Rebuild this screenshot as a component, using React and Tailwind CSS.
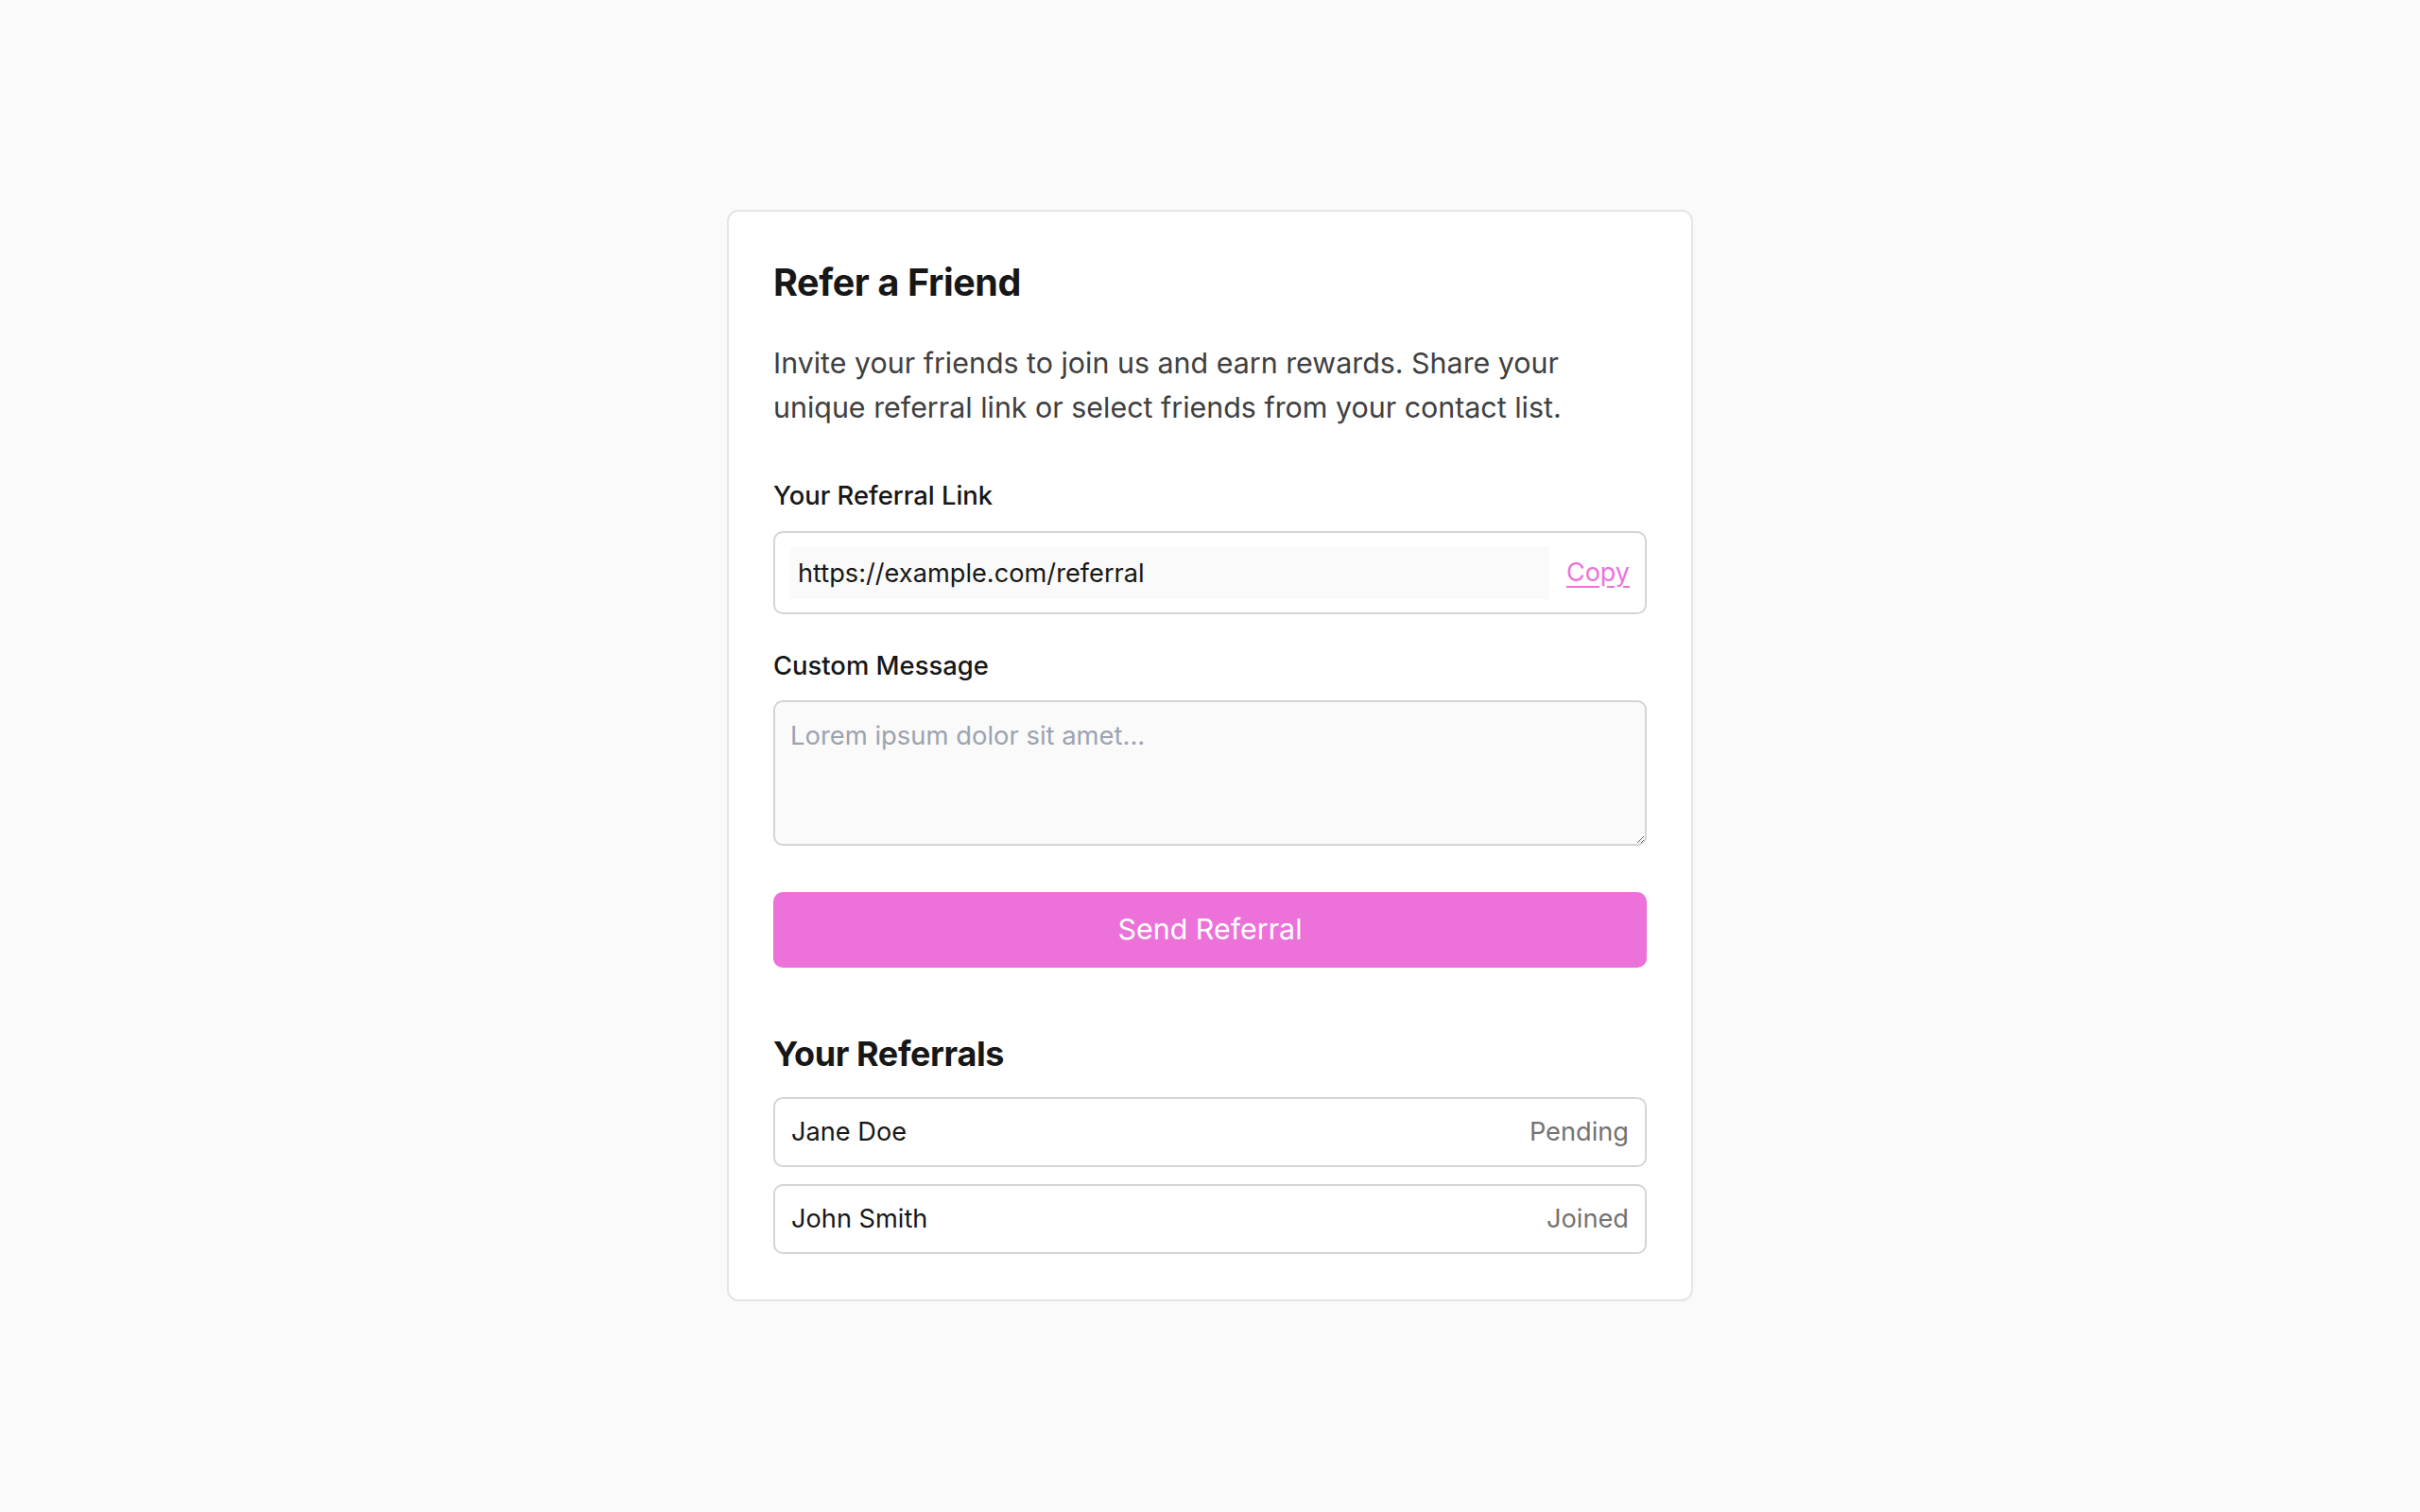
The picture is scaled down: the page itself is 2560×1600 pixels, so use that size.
const referrals = [
  { name: "Jane Doe", status: "Pending" },
  { name: "John Smith", status: "Joined" },
];

export default function App() {
  return (
    <div className="min-h-screen bg-[#fafafa] pt-[222px] font-['Inter',sans-serif]">
      <div className="mx-auto w-[1022px] rounded-[12px] border-2 border-[#e5e5e5] bg-white px-[47px] pt-[50px] pb-[48px]">
        <h2 className="text-[39.5px] font-bold leading-[51px] tracking-[-0.4px] text-[#171717]">Refer a Friend</h2>
        <p className="mt-[36px] text-[30.4px] leading-[47px] text-[#404040]">
          Invite your friends to join us and earn rewards. Share your unique referral link or select friends from your contact list.
        </p>

        <label className="mt-[50px] block text-[27.4px] font-medium leading-[38px] text-[#171717]">Your Referral Link</label>
        <div className="mt-[19px] flex items-center gap-[18px] rounded-[10px] border-2 border-[#d4d4d4] px-[16px] py-[14px]">
          <input
            readOnly
            value="https://example.com/referral"
            className="h-[56px] flex-1 bg-[#fafafa] px-[8px] text-[27.2px] text-[#171717] outline-none"
          />
          <button type="button" className="text-[27px] text-[#ec72da] underline underline-offset-[5px]">Copy</button>
        </div>

        <label className="mt-[35px] block text-[27.4px] font-medium leading-[38px] text-[#171717]">Custom Message</label>
        <textarea
          placeholder="Lorem ipsum dolor sit amet..."
          className="mt-[18px] block h-[154px] w-full rounded-[10px] border-2 border-[#d4d4d4] bg-[#fafafa] px-[16px] py-[16px] text-[27.4px] leading-[38px] text-[#171717] outline-none placeholder:text-[#9ca3af]"
        />

        <button type="button" className="mt-[49px] h-[80px] w-full rounded-[10px] bg-[#ec72da] text-[30.4px] text-white">
          Send Referral
        </button>

        <h3 className="mt-[69px] text-[36px] font-bold leading-[45px] tracking-[-0.4px] text-[#171717]">Your Referrals</h3>
        <ul className="mt-[23px] flex flex-col gap-[18px]">
          {referrals.map((r) => (
            <li key={r.name} className="flex items-center justify-between rounded-[10px] border-2 border-[#d4d4d4] px-[17px] py-[16px] text-[27.2px] leading-[38px]">
              <span className="text-[#171717]">{r.name}</span>
              <span className="text-[#737373]">{r.status}</span>
            </li>
          ))}
        </ul>
      </div>
    </div>
  );
}
